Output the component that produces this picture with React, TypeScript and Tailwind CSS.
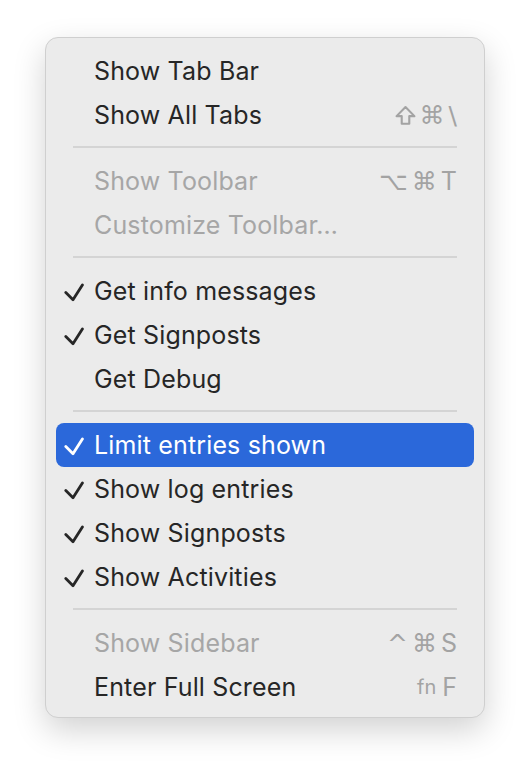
import React from "react";

type Item =
  | { kind: "sep" }
  | {
      kind: "item";
      label: string;
      checked?: boolean;
      disabled?: boolean;
      active?: boolean;
      keys?: string[];
    };

const items: Item[] = [
  { kind: "item", label: "Show Tab Bar" },
  { kind: "item", label: "Show All Tabs", keys: ["shift", "⌘", "\\"] },
  { kind: "sep" },
  { kind: "item", label: "Show Toolbar", disabled: true, keys: ["⌥", "⌘", "T"] },
  { kind: "item", label: "Customize Toolbar…", disabled: true },
  { kind: "sep" },
  { kind: "item", label: "Get info messages", checked: true },
  { kind: "item", label: "Get Signposts", checked: true },
  { kind: "item", label: "Get Debug" },
  { kind: "sep" },
  { kind: "item", label: "Limit entries shown", checked: true, active: true },
  { kind: "item", label: "Show log entries", checked: true },
  { kind: "item", label: "Show Signposts", checked: true },
  { kind: "item", label: "Show Activities", checked: true },
  { kind: "sep" },
  { kind: "item", label: "Show Sidebar", disabled: true, keys: ["^", "⌘", "S"] },
  { kind: "item", label: "Enter Full Screen", keys: ["fn", "F"] },
];

function Check({ white }: { white?: boolean }) {
  return (
    <svg width="20" height="19" viewBox="0 0 20 19" className="mt-[2px]">
      <path
        d="M1.8 9.6 L9 16.8 L18.4 2"
        fill="none"
        stroke={white ? "#ffffff" : "#262626"}
        strokeWidth="2.8"
        strokeLinecap="round"
        strokeLinejoin="round"
      />
    </svg>
  );
}

function ShiftKey() {
  return (
    <svg width="21" height="21" viewBox="0 0 20 20">
      <path
        d="M10 2 L18.5 10.6 H13.6 V17.8 H6.4 V10.6 H1.5 Z"
        fill="none"
        stroke="#a3a3a3"
        strokeWidth="2"
        strokeLinejoin="round"
      />
    </svg>
  );
}

export default function App() {
  return (
    <div className="w-[530px] h-[772px] bg-white overflow-hidden pt-[37px] pl-[45px] font-['Inter','Liberation_Sans',sans-serif]">
      <div className="w-[440px] rounded-[13px] border border-[#cfcfcf] bg-[#ebebeb] pt-[11px] pb-[8px] shadow-[0_12px_32px_rgba(0,0,0,0.18)]">
        {items.map((it, i) =>
          it.kind === "sep" ? (
            <div key={i} className="h-[22px] pt-[9px] px-[27px]">
              <div className="h-[2px] bg-[#d4d4d4]" />
            </div>
          ) : (
            <div key={i} className="px-[10px]">
              <div
                className={
                  "flex h-[44px] items-center rounded-[8px] pl-[8px] pr-[17px] " +
                  (it.active ? "bg-[#2b68da]" : "")
                }
              >
                <div className="w-[30px] flex items-center">
                  {it.checked ? <Check white={it.active} /> : null}
                </div>
                <div
                  className={
                    "flex-1 text-[25px] leading-none tracking-[0.15px] " +
                    (it.active
                      ? "text-white"
                      : it.disabled
                      ? "text-[#a6a6a6]"
                      : "text-[#262626]")
                  }
                >
                  {it.label}
                </div>
                {it.keys ? (
                  <div className="flex items-center gap-[4px] text-[25px] leading-none text-[#a3a3a3] font-['DejaVu_Sans','Inter',sans-serif]">
                    {it.keys.map((k, j) =>
                      k === "shift" ? (
                        <ShiftKey key={j} />
                      ) : (
                        <span
                          key={j}
                          className={
                            k === "fn"
                              ? "text-[20px] mr-[2px] font-['Inter',sans-serif]"
                              : k.length === 1 && /[A-Z]/.test(k)
                              ? "font-['Inter',sans-serif]"
                              : ""
                          }
                        >
                          {k}
                        </span>
                      )
                    )}
                  </div>
                ) : null}
              </div>
            </div>
          )
        )}
      </div>
    </div>
  );
}
